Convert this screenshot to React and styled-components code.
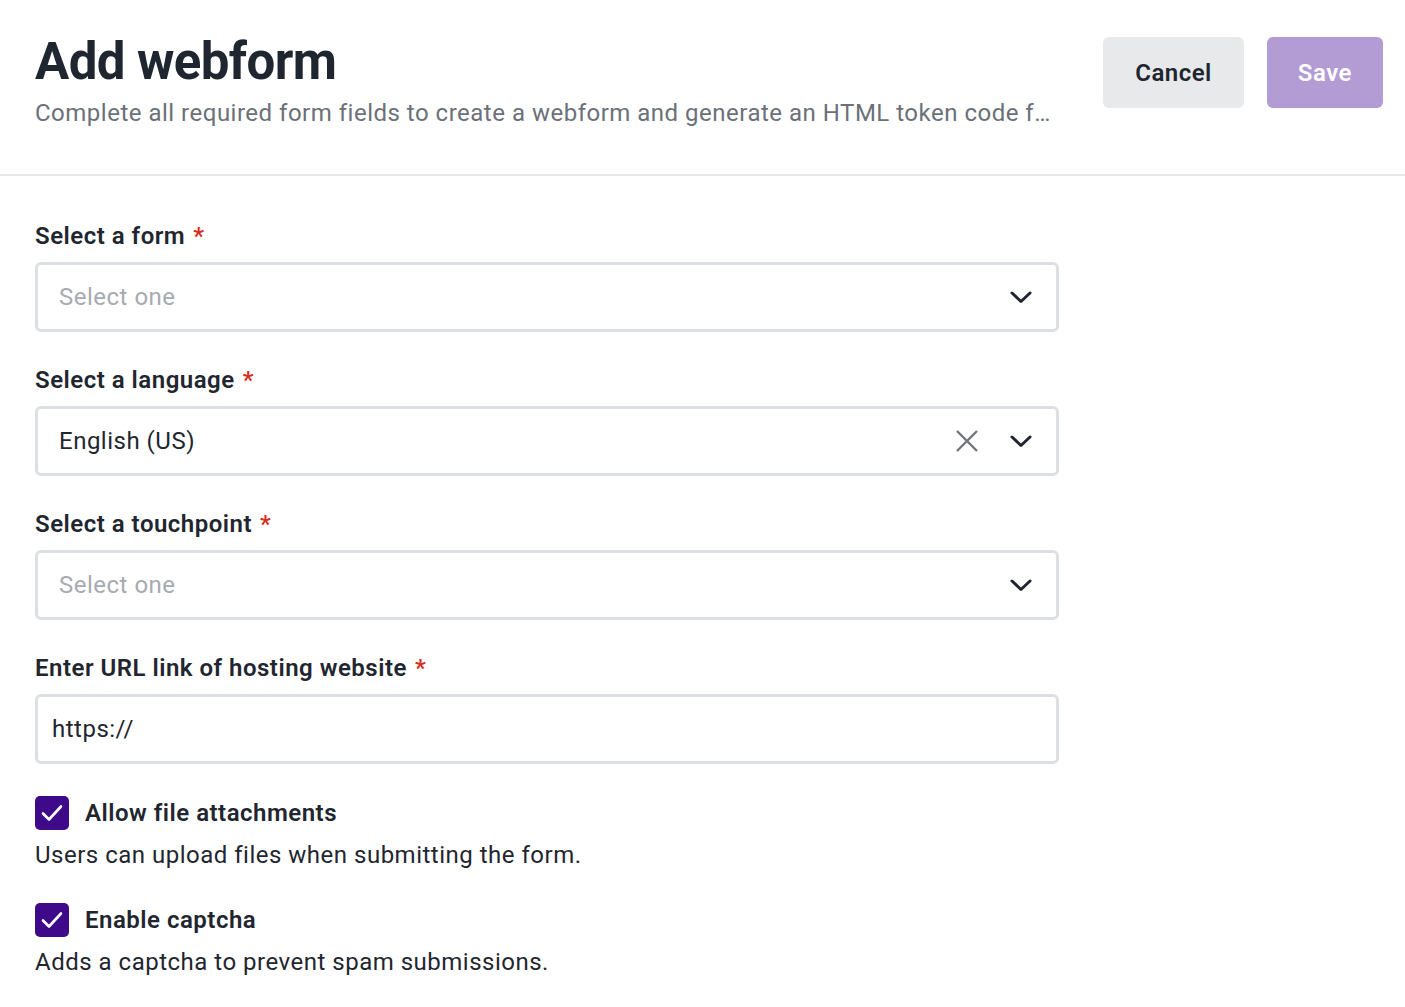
import React, { useState } from "react";
import styled, { createGlobalStyle } from "styled-components";

const GlobalStyle = createGlobalStyle`
  body {
    margin: 0;
    background: #ffffff;
    font-family: Roboto, "Liberation Sans", sans-serif;
    color: #1f2630;
    letter-spacing: 0.5px;
  }
`;

const Header = styled.header`
  display: flex;
  align-items: flex-start;
  gap: 44px;
  padding: 32px 22px 0 35px;
  height: 142px;
  border-bottom: 2px solid #e6e7e9;
`;

const HeaderText = styled.div`
  flex: 1;
  min-width: 0;
`;

const Title = styled.h1`
  margin: 0;
  font-size: 51px;
  line-height: 60px;
  font-weight: 700;
  letter-spacing: -0.6px;
  color: #1f2630;
`;

const Subtitle = styled.p`
  margin: 5px 0 0;
  font-size: 24px;
  line-height: 32px;
  color: #6b7079;
  white-space: nowrap;
  overflow: hidden;
  text-overflow: ellipsis;
`;

const Actions = styled.div`
  display: flex;
  gap: 23px;
  margin-top: 5px;
`;

const Button = styled.button`
  height: 71px;
  padding: 0 ${(p) => (p.$primary ? "31px" : "32px")};
  border: none;
  border-radius: 6px;
  font-family: inherit;
  font-size: 24px;
  font-weight: 600;
  letter-spacing: 0.5px;
  background: ${(p) => (p.$primary ? "#b39bd4" : "#e8e9eb")};
  color: ${(p) => (p.$primary ? "#ffffff" : "#1f2630")};
  cursor: pointer;
`;

const Form = styled.form`
  width: 1024px;
  padding: 44px 0 0 35px;
  display: flex;
  flex-direction: column;
`;

const Field = styled.div`
  display: flex;
  flex-direction: column;
  gap: 10px;
  margin-bottom: 32px;
`;

const Label = styled.label`
  font-size: 24px;
  line-height: 32px;
  font-weight: 600;
  color: #1f2630;
`;

const Required = styled.span`
  color: #d92d20;
  margin-left: 8px;
`;

const Box = styled.div`
  box-sizing: border-box;
  height: 70px;
  border: 3px solid #dcdfe3;
  border-radius: 6px;
  display: flex;
  align-items: center;
  padding: 0 23px 0 ${(p) => p.$pad || 21}px;
  gap: 30px;
`;

const Value = styled.span`
  flex: 1;
  font-size: 24px;
  color: ${(p) => (p.$placeholder ? "#a7abb1" : "#1f2630")};
`;

const TextInput = styled.input`
  flex: 1;
  border: none;
  outline: none;
  font-family: inherit;
  font-size: 24px;
  letter-spacing: 0.5px;
  color: #1f2630;
  padding: 0;
  background: transparent;
`;

const IconButton = styled.span`
  display: flex;
  align-items: center;
  justify-content: center;
  width: 24px;
  height: 24px;
`;

const CheckRow = styled.div`
  display: flex;
  align-items: center;
  gap: 16px;
`;

const CheckBox = styled.span`
  width: 34px;
  height: 34px;
  border-radius: 5px;
  background: #3e0a8a;
  display: flex;
  align-items: center;
  justify-content: center;
`;

const CheckLabel = styled.span`
  font-size: 24px;
  line-height: 32px;
  font-weight: 600;
`;

const Help = styled.p`
  margin: 9px 0 32px;
  font-size: 24px;
  line-height: 32px;
  color: #1f2630;
`;

const Chevron = () => (
  <IconButton>
    <svg width="22" height="14" viewBox="0 0 22 14" fill="none">
      <path d="M2 3l9 8.5L20 3" stroke="#1f2630" strokeWidth="3" strokeLinecap="round" strokeLinejoin="round" />
    </svg>
  </IconButton>
);

const Clear = () => (
  <IconButton>
    <svg width="24" height="24" viewBox="0 0 24 24" fill="none">
      <path d="M2 2l20 20M22 2L2 22" stroke="#71757b" strokeWidth="2.4" />
    </svg>
  </IconButton>
);

const Tick = () => (
  <svg width="24" height="20" viewBox="0 0 24 20" fill="none">
    <path d="M3 10.5l6 6L21 3.5" stroke="#ffffff" strokeWidth="2.6" strokeLinecap="round" strokeLinejoin="round" />
  </svg>
);

const SelectField = ({ label, value, clearable }) => (
  <Field>
    <Label>
      {label}
      <Required>*</Required>
    </Label>
    <Box>
      <Value $placeholder={!value}>{value || "Select one"}</Value>
      {clearable && <Clear />}
      <Chevron />
    </Box>
  </Field>
);

const Option = ({ label, help }) => (
  <>
    <CheckRow>
      <CheckBox>
        <Tick />
      </CheckBox>
      <CheckLabel>{label}</CheckLabel>
    </CheckRow>
    <Help>{help}</Help>
  </>
);

const App = () => {
  const [url, setUrl] = useState("https://");

  return (
    <>
      <GlobalStyle />
      <Header>
        <HeaderText>
          <Title>Add webform</Title>
          <Subtitle>
            Complete all required form fields to create a webform and generate an HTML token code for embedding on your website.
          </Subtitle>
        </HeaderText>
        <Actions>
          <Button type="button">Cancel</Button>
          <Button type="button" $primary>Save</Button>
        </Actions>
      </Header>
      <Form onSubmit={(e) => e.preventDefault()}>
        <SelectField label="Select a form" />
        <SelectField label="Select a language" value="English (US)" clearable />
        <SelectField label="Select a touchpoint" />
        <Field>
          <Label>
            Enter URL link of hosting website
            <Required>*</Required>
          </Label>
          <Box $pad={14}>
            <TextInput value={url} onChange={(e) => setUrl(e.target.value)} />
          </Box>
        </Field>
        <Option label="Allow file attachments" help="Users can upload files when submitting the form." />
        <Option label="Enable captcha" help="Adds a captcha to prevent spam submissions." />
      </Form>
    </>
  );
};

export default App;
